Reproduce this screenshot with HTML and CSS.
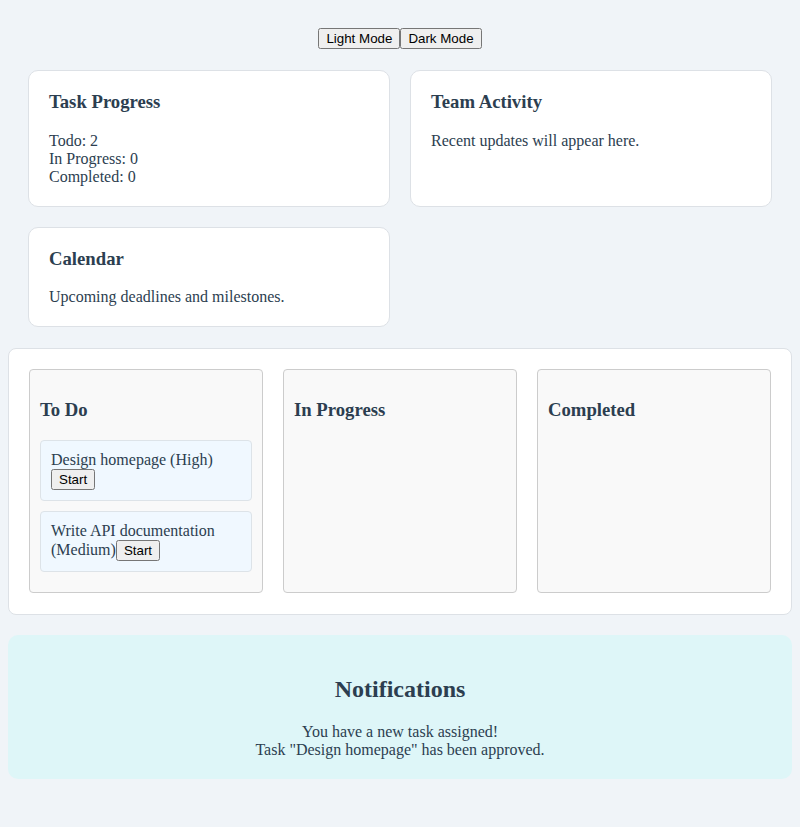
FILE: index.html
```html
<!DOCTYPE html>
<html lang="en">
<head>
<meta charset="utf-8">
<title>Task Dashboard</title>
<link rel="stylesheet" href="styles.css">
</head>
<body>
<div class="top">
  <div class="theme-toggle"><button>Light Mode</button><button>Dark Mode</button></div>
  <div class="dashboard">
    <div class="card">
      <h3>Task Progress</h3>
      <div>Todo: 2</div>
      <div>In Progress: 0</div>
      <div>Completed: 0</div>
    </div>
    <div class="card">
      <h3>Team Activity</h3>
      <p>Recent updates will appear here.</p>
    </div>
    <div class="card">
      <h3>Calendar</h3>
      <p>Upcoming deadlines and milestones.</p>
    </div>
  </div>
</div>
<div class="board">
  <div class="column">
    <h3>To Do</h3>
    <div class="task">Design homepage (High) <button>Start</button></div>
    <div class="task">Write API documentation (Medium)<button>Start</button></div>
  </div>
  <div class="column">
    <h3>In Progress</h3>
  </div>
  <div class="column">
    <h3>Completed</h3>
  </div>
</div>
<div class="notifications">
  <h2>Notifications</h2>
  <p>You have a new task assigned!</p>
  <p>Task "Design homepage" has been approved.</p>
</div>
</body>
</html>
```
FILE: styles.css
```css
body {
  margin: 8px;
  background: #f0f4f8;
  color: #2c3e50;
  font-family: "Liberation Serif", "Times New Roman", serif;
  font-size: 16px;
}

button {
  font-family: "Liberation Sans", Arial, sans-serif;
  font-size: 13.33px;
  color: #000;
}

.top {
  padding: 20px 20px 0;
}

.theme-toggle {
  display: flex;
  justify-content: center;
  margin-bottom: 21px;
}

.dashboard {
  display: grid;
  grid-template-columns: 1fr 1fr;
  gap: 20px;
}

.card {
  background: #fff;
  border: 1px solid #dde1e6;
  border-radius: 10px;
  padding: 20px;
}

.card h3 {
  margin: 0 0 18.72px;
}

.card p {
  margin: 0;
}

.board {
  margin-top: 21px;
  background: #fff;
  border: 1px solid #dde1e6;
  border-radius: 8px;
  padding: 20px 20px 21px;
  display: grid;
  grid-template-columns: repeat(3, 1fr);
  gap: 20px;
}

.column {
  background: #f9f9f9;
  border: 1px solid #ccc;
  border-radius: 4px;
  padding: 10px;
}

.task {
  background: #f0f8ff;
  border: 1px solid #dde3e8;
  border-radius: 4px;
  padding: 10px;
  margin-bottom: 10px;
}

.notifications {
  margin-top: 20px;
  background: #def6f8;
  border-radius: 10px;
  padding: 21px 20px 20px;
  text-align: center;
}

.notifications p {
  margin: 0;
}
```
